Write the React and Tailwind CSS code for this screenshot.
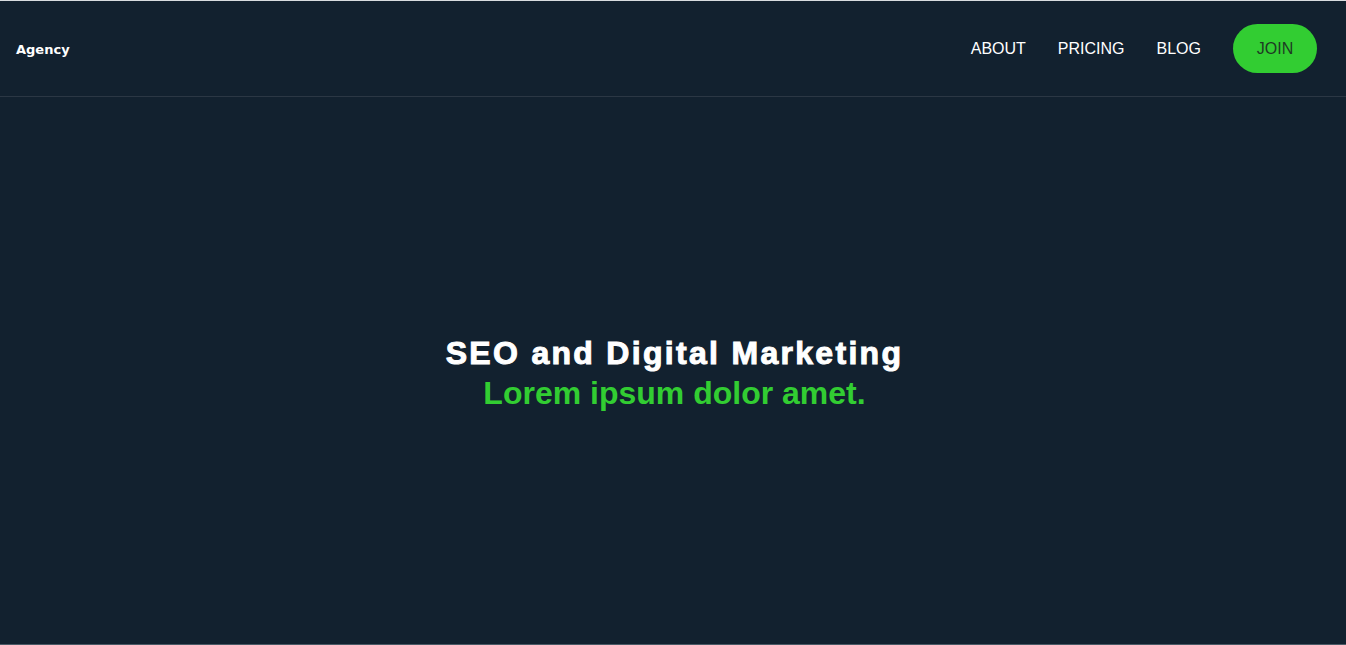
export default function App() {
  return (
    <div className="w-[1346px] h-[645px] bg-[#12212f] flex flex-col overflow-hidden border-t border-[#d9dde0]" style={{ fontFamily: '"Liberation Sans", Arial, sans-serif' }}>
      <header className="h-[96px] shrink-0 flex items-center justify-between pl-4 pr-[29px] border-b border-[#2b3744]">
        <div className="text-[13px] font-bold text-white pt-[3px]" style={{ fontFamily: '"DejaVu Sans", Verdana, sans-serif' }}>Agency</div>
        <nav className="flex items-center">
          <a className="text-white text-[16px] mr-[32px]">ABOUT</a>
          <a className="text-white text-[16px] mr-[32px]">PRICING</a>
          <a className="text-white text-[16px] mr-[32px]">BLOG</a>
          <a className="bg-[#32cd32] text-[#1e3a24] text-[16px] rounded-full w-[84px] h-[49px] flex items-center justify-center">JOIN</a>
        </nav>
      </header>
      <main className="flex-1 flex flex-col items-center justify-center pt-[4px] pl-[3px]">
        <h1 className="text-white text-[32px] font-bold leading-[40px] tracking-[2.3px] [-webkit-text-stroke:1px_white]">SEO and Digital Marketing</h1>
        <h2 className="text-[#32cd32] text-[32px] font-bold leading-[40px]">Lorem ipsum dolor amet.</h2>
      </main>
      <div className="h-[1px] bg-[#4a5a66] shrink-0"></div>
    </div>
  );
}
